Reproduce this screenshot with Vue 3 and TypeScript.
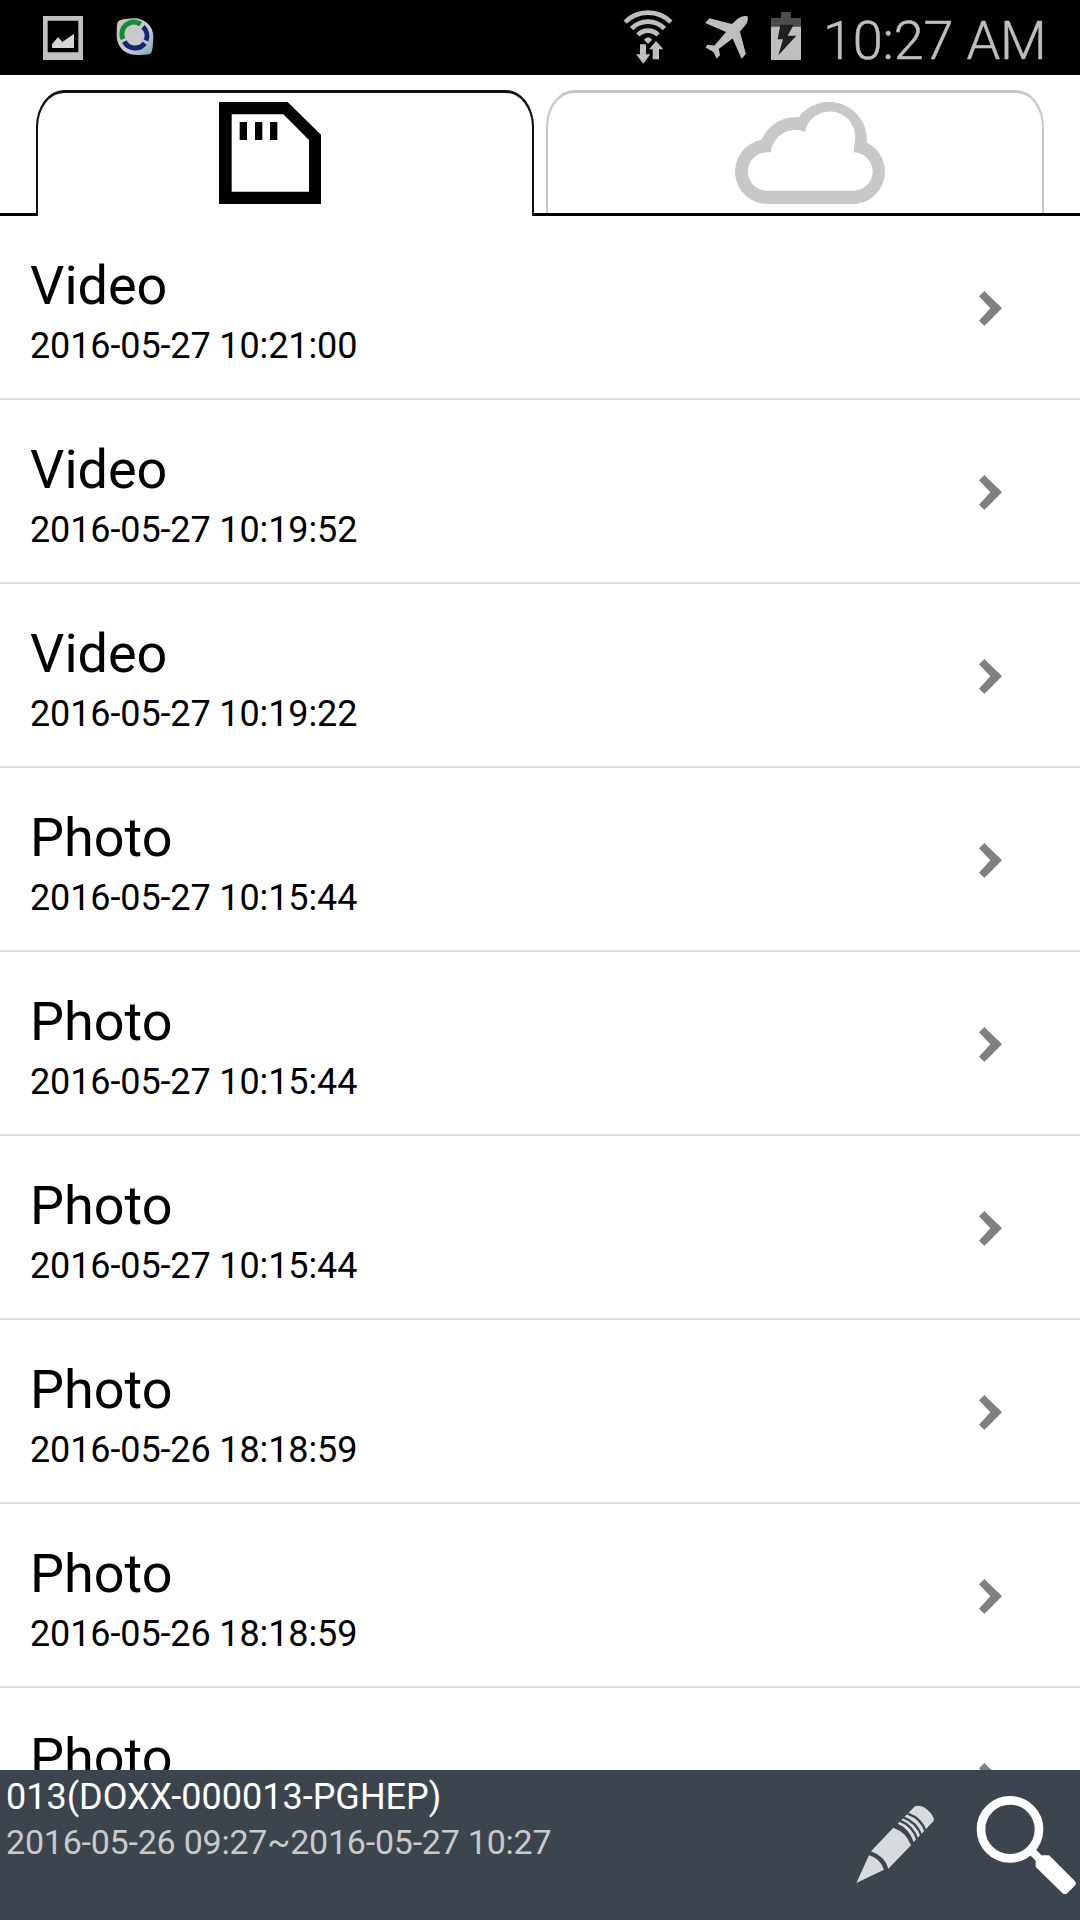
<script setup lang="ts">
interface MediaItem {
  kind: 'Video' | 'Photo'
  time?: string
}

const items: MediaItem[] = [
  { kind: 'Video', time: '2016-05-27 10:21:00' },
  { kind: 'Video', time: '2016-05-27 10:19:52' },
  { kind: 'Video', time: '2016-05-27 10:19:22' },
  { kind: 'Photo', time: '2016-05-27 10:15:44' },
  { kind: 'Photo', time: '2016-05-27 10:15:44' },
  { kind: 'Photo', time: '2016-05-27 10:15:44' },
  { kind: 'Photo', time: '2016-05-26 18:18:59' },
  { kind: 'Photo', time: '2016-05-26 18:18:59' },
  { kind: 'Photo' },
]
</script>

<template>
  <div class="screen">
    <header class="status">
      <svg class="gallery" viewBox="129 48 120 132">
        <path fill="#c0c0c0" fill-rule="evenodd" d="M129 48H249V180H129ZM143 62V157H235V62Z" />
        <path fill="#d6d6d6" d="M156 133L174 111L187 126L222 101V144H156Z" />
      </svg>
      <svg class="app" viewBox="348 51 114 116">
        <defs>
          <linearGradient id="drop" x1="0" y1="0" x2="1" y2="1">
            <stop offset="0" stop-color="#c4c0c0" />
            <stop offset=".6" stop-color="#cbcbd0" />
            <stop offset="1" stop-color="#74a9c4" />
          </linearGradient>
        </defs>
        <path fill="url(#drop)" d="M352 66Q356 56 400 54C436 54 461 78 460 112Q459 150 453 159Q447 165 404 164C370 162 349 136 350 104Q350 78 352 66Z" />
        <g fill="none" stroke-width="15">
          <path stroke="#148a32" d="M369 117A36 36 0 0 1 422 72" />
          <path stroke="#17236f" d="M429 80A36 36 0 0 1 438 121" />
          <path stroke="#17236f" d="M434 129A36 36 0 0 1 373 124" />
        </g>
      </svg>
      <span class="spacer"></span>
      <svg class="wifi" viewBox="69 29 150 162">
        <g fill="none" stroke="#bebebe" stroke-width="14">
          <path d="M75.400 65.400A97 97 0 0 1 212.600 65.400" />
          <path d="M94.500 84.500A70 70 0 0 1 193.500 84.500" />
          <path d="M113.600 103.600A43 43 0 0 1 174.400 103.600" />
        </g>
        <path fill="#bebebe" d="M132 118Q144 103 157 118L144 131Z" />
        <path fill="#bebebe" stroke="#000" stroke-width="5" paint-order="stroke" d="M168 122L190 147H177V177H158V147H147Z" />
        <path fill="#bebebe" d="M120 132H138V162H151L130 190L108 162H120Z" />
      </svg>
      <svg class="plane" viewBox="315 47 132 130">
        <path fill="#bebebe" d="M443 48Q448 63 434 78L420 94L438 162L425 176L398 115L356 147L360 165L350 176L340 156L316 142L322 134L343 136L378 95L315 68L328 54L396 71L413 55Q430 44 443 48Z" />
      </svg>
      <svg class="battery" viewBox="513 37 90 144">
        <path fill="#4c4c4c" d="M543 37H573V55H603V82H513V55H543Z" />
        <path fill="#bebebe" d="M513 81H603V181H513Z" />
        <path fill="#202020" d="M541 75H581L563 108H589L535 167L549 119H533Z" />
      </svg>
      <span class="clock">10:27 AM</span>
    </header>

    <nav class="tabs">
      <span class="edge lead"></span>
      <div class="tab active">
        <svg class="sd" viewBox="0 0 306 306">
          <path fill-rule="evenodd" d="M0 0H206L306 98V306H0ZM38 37V269H270V114L193 37Z" />
          <path d="M62 60H84V114H62ZM108 60H130V114H108ZM153 60H175V114H153Z" />
        </svg>
      </div>
      <span class="edge mid"></span>
      <div class="tab-holder">
        <div class="tab idle">
          <svg class="cloud" viewBox="0 0 450 306">
            <path
              fill="#c8c8c8"
              fill-rule="evenodd"
              d="M97 306A97 97 0 0 1 80 113.500A109 109 0 0 1 191 46A113 113 0 0 1 395 121.600A97 97 0 0 1 353 306ZM96 266A57.500 57.500 0 0 1 96 151H107A74 74 0 0 1 210 90A75.500 75.500 0 0 1 359 118L356 151A58 57.500 0 0 1 354 266Z"
            />
          </svg>
        </div>
      </div>
      <span class="edge tail"></span>
    </nav>

    <main class="list">
      <div v-for="(item, i) in items" :key="i" class="row">
        <div class="info">
          <div class="kind">{{ item.kind }}</div>
          <div v-if="item.time" class="time">{{ item.time }}</div>
        </div>
        <svg class="chevron" viewBox="0 0 69 105">
          <path fill="#808080" d="M16 0L69 52L16 105L0 89L34 52L0 16Z" />
        </svg>
      </div>
    </main>

    <footer class="bar">
      <div class="device">
        <div class="name">013(DOXX-000013-PGHEP)</div>
        <div class="range">2016-05-26 09:27~2016-05-27 10:27</div>
      </div>
      <svg class="pencil" viewBox="107 196 234 234">
        <g fill="#d8dbdd">
          <path d="M108 430L146 347Q180 356 191 390Z" />
          <path d="M152 335L219 264Q258 278 272 317L204 387Q194 350 152 335Z" />
          <path d="M232 252L284 200Q302 194 322 211Q343 230 340 244L280 307Q266 266 232 252Z" />
        </g>
        <g fill="none" stroke="#3c454e" stroke-width="7">
          <path d="M238 243Q278 258 292 302" />
          <path d="M249 233Q290 248 304 290" />
          <path d="M262 222Q303 236 317 277" />
        </g>
      </svg>
      <svg class="search" viewBox="468 165 300 297">
        <circle cx="570" cy="268" r="87" fill="none" stroke="#fff" stroke-width="26" />
        <path stroke="#fff" stroke-width="24" d="M630 328L665 363" />
        <path fill="#fff" stroke="#fff" stroke-width="8" stroke-linejoin="round" d="M651 362L668 350H686L763 427V433L738 458H731L651 379Z" />
      </svg>
    </footer>
  </div>
</template>

<style>
body {
  margin: 0;
  background: #fff;
}
</style>

<style scoped>
.screen {
  width: 1080px;
  height: 1920px;
  display: flex;
  flex-direction: column;
  overflow: hidden;
  background: #fff;
  color: #000;
  font-family: Roboto, 'Liberation Sans', sans-serif;
}
svg {
  display: block;
  flex: none;
}
.status {
  flex: none;
  height: 75px;
  display: flex;
  align-items: flex-start;
  background: #000;
}
.gallery {
  width: 40px;
  height: 44px;
  margin: 16px 0 0 43px;
}
.app {
  width: 38px;
  height: 39px;
  margin: 17px 0 0 33px;
}
.spacer {
  flex: 1;
}
.wifi {
  width: 50px;
  height: 54px;
  margin: 10px 32px 0 0;
}
.plane {
  width: 44px;
  height: 43px;
  margin: 16px 22px 0 0;
}
.battery {
  width: 30px;
  height: 48px;
  margin: 12px 22px 0 0;
}
.clock {
  width: 257px;
  margin-top: 9px;
  font-size: 54px;
  line-height: 64px;
  font-weight: 300;
  letter-spacing: -0.15px;
  -webkit-text-stroke: 0.5px #bebebe;
  color: #bebebe;
  white-space: nowrap;
}
.tabs {
  flex: none;
  height: 141px;
  display: flex;
  box-sizing: border-box;
  padding-top: 15px;
}
.edge,
.tab-holder {
  box-sizing: border-box;
  border-bottom: 3px solid #000;
}
.lead {
  width: 36px;
}
.mid {
  width: 12px;
}
.tail {
  flex: 1;
}
.tab {
  box-sizing: border-box;
  height: 100%;
  display: flex;
  justify-content: center;
  padding-top: 9px;
  border: 2px solid #111;
  border-top-width: 3px;
  border-bottom: 0;
  border-radius: 28px 28px 0 0 / 37px 37px 0 0;
}
.active {
  width: 498px;
  padding-right: 30px;
}
.tab-holder {
  width: 498px;
}
.idle {
  border-color: #c8c8c8;
  padding-left: 30px;
}
.sd {
  width: 102px;
  height: 102px;
}
.cloud {
  width: 150px;
  height: 102px;
}
.list {
  flex: 1;
  min-height: 0;
  overflow: hidden;
}
.row {
  height: 184px;
  box-sizing: border-box;
  display: flex;
  justify-content: space-between;
  padding: 38px 78px 0 30px;
  border-bottom: 2px solid #dcdcdc;
}
.kind {
  font-size: 54px;
  line-height: 64px;
}
.time {
  margin-top: 7px;
  font-size: 36px;
  line-height: 42px;
  letter-spacing: -0.12px;
}
.chevron {
  width: 23px;
  height: 35px;
  margin-top: 37px;
}
.bar {
  flex: none;
  height: 150px;
  display: flex;
  align-items: flex-start;
  background: #3c454e;
}
.device {
  flex: 1;
  padding: 6px 0 0 6px;
}
.name {
  font-size: 36px;
  line-height: 42px;
  color: #fff;
}
.range {
  margin-top: 4px;
  font-size: 34px;
  line-height: 40px;
  letter-spacing: -0.22px;
  color: #c8cacc;
}
.pencil {
  width: 78px;
  height: 78px;
  margin: 35px 42px 0 0;
}
.search {
  width: 100px;
  height: 99px;
  margin: 25px 4px 0 0;
}
</style>
